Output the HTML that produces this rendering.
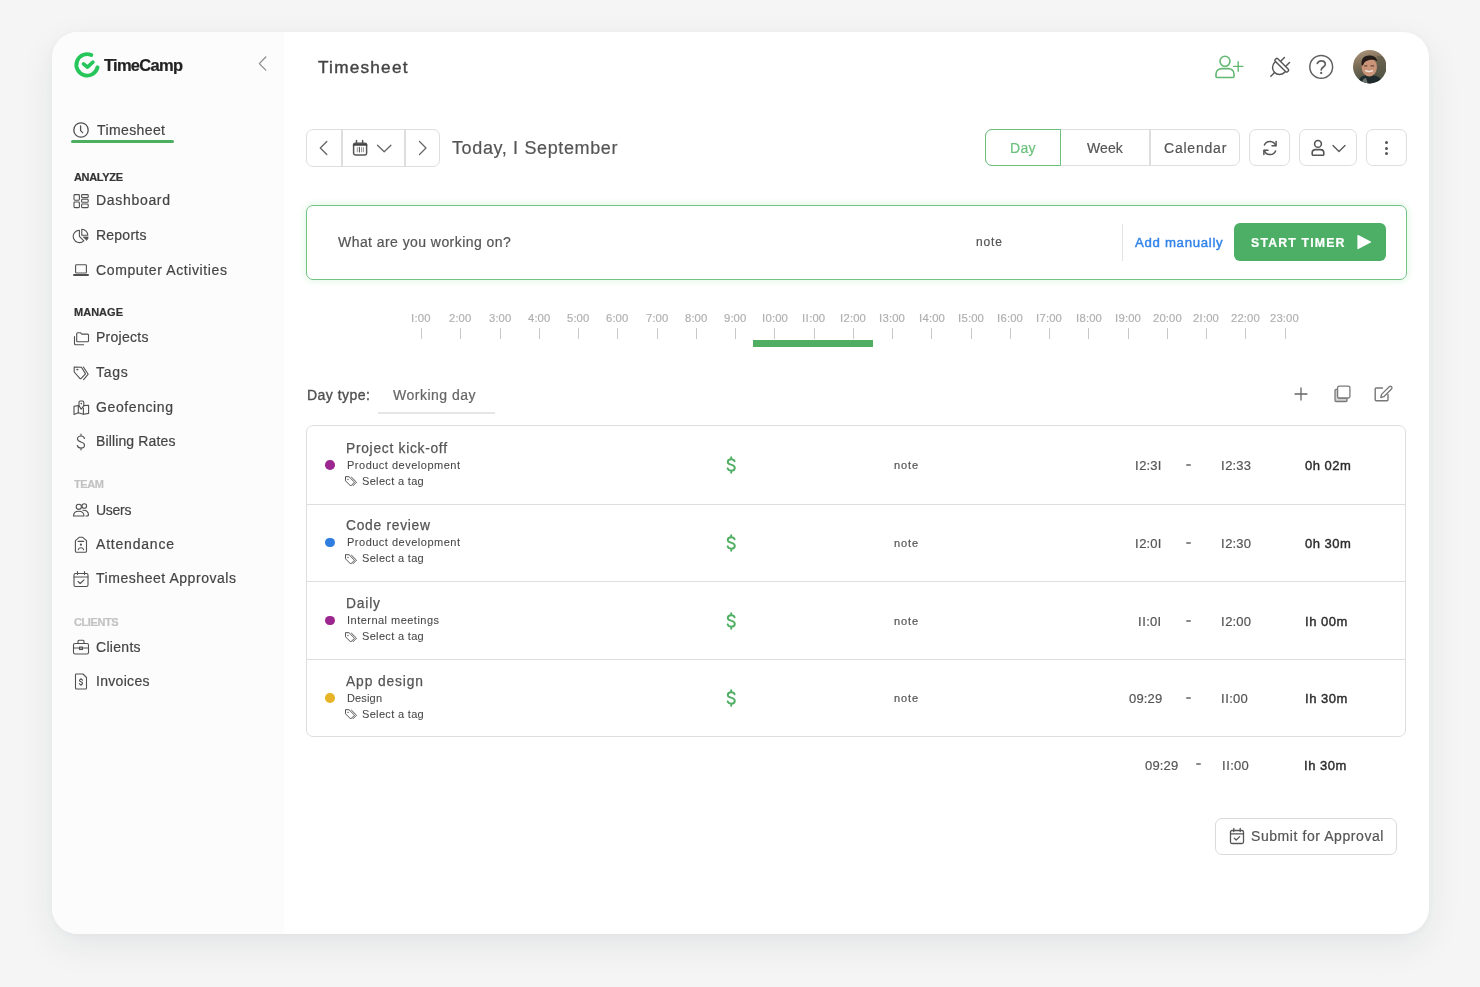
<!DOCTYPE html>
<html><head><meta charset="utf-8"><style>
html,body{margin:0;padding:0;}
body{width:1480px;height:987px;overflow:hidden;position:relative;background:#f5f5f5;font-family:"Liberation Sans",sans-serif;}
.a{position:absolute;box-sizing:border-box;}
.t{position:absolute;white-space:nowrap;line-height:1;will-change:transform;-webkit-text-stroke:0.2px currentColor;}
.o{display:inline-block;position:relative;-webkit-text-fill-color:transparent;-webkit-text-stroke-color:transparent;}
.o::after{content:'I';position:absolute;left:0;top:0;-webkit-text-fill-color:currentColor;-webkit-text-stroke-color:currentColor;letter-spacing:0;}
.card{background:#fff;border-radius:26px;box-shadow:0 12px 36px rgba(20,35,50,0.075),0 1px 8px rgba(20,35,50,0.03);}
</style></head><body>
<div class="a card" style="left:52px;top:32px;width:1376.5px;height:902px;"></div>
<div class="a" style="left:52px;top:32px;width:232px;height:902px;background:#fcfcfc;border-radius:26px 0 0 26px;"></div>
<svg class="a" style="left:0px;top:0px;" width="120" height="100" viewBox="0 0 120 100" fill="none" stroke-linecap="round" stroke-linejoin="round"><path d="M97.53 67.31 A10.7 10.7 0 1 1 91.33 55.07" stroke="#27c65a" stroke-width="3.9"/><path d="M83.5 63.8 L87.4 67.1 L92.9 62.1" stroke="#27c65a" stroke-width="3.6"/></svg>
<div class="t" style="left:104.00px;top:56.93px;font-size:16.5px;color:#222;letter-spacing:-0.722px;font-weight:700;">TimeCamp</div>
<svg class="a" style="left:255px;top:55px;" width="14" height="18" viewBox="0 0 14 18" fill="none" stroke-linecap="round" stroke-linejoin="round"><path d="M10.8 2 L4.3 8.6 L10.8 15.2" stroke="#8a8a8a" stroke-width="1.2"/></svg>
<svg class="a" style="left:72px;top:121px;" width="18" height="18" viewBox="0 0 18 18" fill="none" stroke-linecap="round" stroke-linejoin="round"><circle cx="9" cy="9" r="7.2" stroke="#505050" stroke-width="1.3"/><path d="M8.6 5 V9.6 L10.6 11.6" stroke="#505050" stroke-width="1.3"/></svg>
<div class="t" style="left:97.00px;top:123.15px;font-size:14px;color:#444;letter-spacing:0.396px;">Timesheet</div>
<div class="a" style="left:71px;top:140px;width:103px;height:2.6px;background:#4caf5f;border-radius:2px;"></div>
<div class="t" style="left:74.00px;top:171.89px;font-size:11px;color:#333;letter-spacing:-0.323px;font-weight:700;">ANALYZE</div>
<div class="t" style="left:74.00px;top:307.29px;font-size:11px;color:#333;letter-spacing:0.022px;font-weight:700;">MANAGE</div>
<div class="t" style="left:74.00px;top:479.29px;font-size:11px;color:#c2c2c2;letter-spacing:-0.388px;font-weight:700;">TEAM</div>
<div class="t" style="left:74.00px;top:616.59px;font-size:11px;color:#c2c2c2;letter-spacing:-0.409px;font-weight:700;">CLIENTS</div>
<div class="t" style="left:96.00px;top:193.45px;font-size:14px;color:#444;letter-spacing:0.689px;">Dashboard</div>
<svg class="a" style="left:72px;top:191.70000000000002px;" width="18" height="18" viewBox="0 0 18 18" fill="none" stroke-linecap="round" stroke-linejoin="round"><rect x="2" y="2.6" width="5.4" height="5.6" rx="0.9" stroke="#505050" stroke-width="1.1"/><rect x="2" y="10" width="5.4" height="5.6" rx="0.9" stroke="#505050" stroke-width="1.1"/><rect x="9.6" y="2.6" width="6.6" height="3" rx="0.9" stroke="#505050" stroke-width="1.1"/><rect x="9.6" y="7.3" width="6.6" height="3" rx="0.9" stroke="#505050" stroke-width="1.1"/><rect x="9.6" y="12" width="6.6" height="3.6" rx="0.9" stroke="#505050" stroke-width="1.1"/></svg>
<div class="t" style="left:96.00px;top:228.45px;font-size:14px;color:#444;letter-spacing:0.230px;">Reports</div>
<svg class="a" style="left:72px;top:226.70000000000002px;" width="18" height="18" viewBox="0 0 18 18" fill="none" stroke-linecap="round" stroke-linejoin="round"><path d="M7.4 9.4 V3.2 A6.2 6.2 0 1 0 11.8 13.8 Z" stroke="#505050" stroke-width="1.1"/><path d="M9.8 8.3 V2.3 A6 6 0 0 1 15.8 8.3 Z" stroke="#505050" stroke-width="1.1"/><path d="M11.4 9.9 H16.2 A4.8 4.8 0 0 1 14.8 13.3 Z" fill="#505050" stroke="#505050" stroke-width="0.6"/></svg>
<div class="t" style="left:96.00px;top:262.85px;font-size:14px;color:#444;letter-spacing:0.621px;">Computer Activities</div>
<svg class="a" style="left:72px;top:261.09999999999997px;" width="18" height="18" viewBox="0 0 18 18" fill="none" stroke-linecap="round" stroke-linejoin="round"><rect x="3.6" y="3.8" width="10.8" height="8.2" rx="0.8" stroke="#505050" stroke-width="1.1"/><path d="M2 14 H16" stroke="#505050" stroke-width="2"/></svg>
<div class="t" style="left:96.00px;top:330.45px;font-size:14px;color:#444;letter-spacing:0.261px;">Projects</div>
<svg class="a" style="left:72px;top:328.7px;" width="18" height="18" viewBox="0 0 18 18" fill="none" stroke-linecap="round" stroke-linejoin="round"><path d="M4.7 11.7 V4.8 A1 1 0 0 1 5.7 3.8 H8.6 L9.8 5.1 H15.5 A1 1 0 0 1 16.5 6.1 V11.7 A1 1 0 0 1 15.5 12.7 H5.7 A1 1 0 0 1 4.7 11.7 Z" stroke="#505050" stroke-width="1.1"/><path d="M2.5 7.5 V14.8 A1 1 0 0 0 3.5 15.8 H11.6" stroke="#505050" stroke-width="1.1"/></svg>
<div class="t" style="left:96.00px;top:365.45px;font-size:14px;color:#444;letter-spacing:0.743px;">Tags</div>
<svg class="a" style="left:72px;top:363.7px;" width="18" height="18" viewBox="0 0 18 18" fill="none" stroke-linecap="round" stroke-linejoin="round"><path d="M2.2 3 V8 L7.8 14.3 A1 1 0 0 0 9.2 14.3 L13.5 9.9 L9.5 3.2 Z" stroke="#505050" stroke-width="1.1"/><circle cx="5.2" cy="5.6" r="0.6" stroke="#505050" stroke-width="0.8"/><path d="M11.4 3 L16.2 10.2 L11.6 15.7" stroke="#505050" stroke-width="1.1"/></svg>
<div class="t" style="left:96.00px;top:399.75px;font-size:14px;color:#444;letter-spacing:0.600px;">Geofencing</div>
<svg class="a" style="left:72px;top:398.0px;" width="18" height="18" viewBox="0 0 18 18" fill="none" stroke-linecap="round" stroke-linejoin="round"><path d="M6.3 7.6 L2 8.2 V16.4 L6.3 14.8 L11.4 16.2 L16.6 15.4 V7.2 L11.8 7.6" stroke="#505050" stroke-width="1.1"/><path d="M6.3 7.6 V14.8 M11.4 10 V16.2" stroke="#505050" stroke-width="1.1"/><path d="M9.2 11.2 L7 7.6 V4.2 A1.2 1.2 0 0 1 8.2 3 H10.6 A1.2 1.2 0 0 1 11.8 4.2 V7.6 Z" stroke="#505050" stroke-width="1.1"/><circle cx="9.3" cy="5.6" r="0.8" fill="#505050"/></svg>
<div class="t" style="left:96.00px;top:434.25px;font-size:14px;color:#444;letter-spacing:0.132px;">Billing Rates</div>
<svg class="a" style="left:72px;top:432.5px;" width="18" height="18" viewBox="0 0 18 18" fill="none" stroke-linecap="round" stroke-linejoin="round"><path d="M12.5 5.5 C12 3.8 10.5 3 9 3 C7 3 5.5 4 5.5 6 C5.5 8 7.5 8.5 9 9 C10.8 9.5 12.5 10.2 12.5 12.2 C12.5 14.2 10.8 15 9 15 C7.2 15 5.8 14.2 5.3 12.5 M9 1 V3 M9 15 V17" stroke="#505050" stroke-width="1.1"/></svg>
<div class="t" style="left:96.00px;top:502.75px;font-size:14px;color:#444;letter-spacing:-0.264px;">Users</div>
<svg class="a" style="left:72px;top:501.0px;" width="18" height="18" viewBox="0 0 18 18" fill="none" stroke-linecap="round" stroke-linejoin="round"><circle cx="6.8" cy="5.8" r="2.6" stroke="#505050" stroke-width="1.1"/><circle cx="12.3" cy="5" r="2.3" stroke="#505050" stroke-width="1.1"/><path d="M1.5 15 C1.5 11.8 3.8 10.2 6.8 10.2 C9.8 10.2 12 11.8 12 15 Z" stroke="#505050" stroke-width="1.1"/><path d="M11 9.2 C14 9 16.5 10.5 16.5 14 C16.5 15 15.5 15 14 15" stroke="#505050" stroke-width="1.1"/></svg>
<div class="t" style="left:96.00px;top:536.75px;font-size:14px;color:#444;letter-spacing:0.797px;">Attendance</div>
<svg class="a" style="left:72px;top:535.0px;" width="18" height="18" viewBox="0 0 18 18" fill="none" stroke-linecap="round" stroke-linejoin="round"><path d="M3.4 5.6 V16 A1.2 1.2 0 0 0 4.6 17.2 H13.3 A1.2 1.2 0 0 0 14.5 16 V5.6 L10.7 2.3 H7.2 Z" stroke="#505050" stroke-width="1.1"/><path d="M6.2 6.4 H11.6" stroke="#505050" stroke-width="1.3"/><circle cx="8.95" cy="9.7" r="1.1" fill="#505050"/><path d="M6.3 14.6 A2.7 2.3 0 0 1 11.6 14.6" stroke="#505050" stroke-width="1.1"/></svg>
<div class="t" style="left:96.00px;top:571.35px;font-size:14px;color:#444;letter-spacing:0.544px;">Timesheet Approvals</div>
<svg class="a" style="left:72px;top:569.6px;" width="18" height="18" viewBox="0 0 18 18" fill="none" stroke-linecap="round" stroke-linejoin="round"><rect x="2" y="3.5" width="14" height="13" rx="1.5" stroke="#505050" stroke-width="1.1"/><path d="M2 7 H16 M5.5 1.5 V4.5 M12.5 1.5 V4.5 M6 11.5 L8.2 13.5 L12 9.8" stroke="#505050" stroke-width="1.1"/></svg>
<div class="t" style="left:96.00px;top:639.75px;font-size:14px;color:#444;letter-spacing:0.301px;">Clients</div>
<svg class="a" style="left:72px;top:638.0px;" width="18" height="18" viewBox="0 0 18 18" fill="none" stroke-linecap="round" stroke-linejoin="round"><rect x="1.5" y="5.5" width="15" height="10.5" rx="1.5" stroke="#505050" stroke-width="1.1"/><path d="M6 5.5 V3.2 A1 1 0 0 1 7 2.2 H11 A1 1 0 0 1 12 3.2 V5.5 M1.5 10 H16.5" stroke="#505050" stroke-width="1.1"/><rect x="7.5" y="9" width="3" height="2.5" stroke="#505050" stroke-width="1.1"/></svg>
<div class="t" style="left:96.00px;top:674.15px;font-size:14px;color:#444;letter-spacing:0.306px;">Invoices</div>
<svg class="a" style="left:72px;top:672.4px;" width="18" height="18" viewBox="0 0 18 18" fill="none" stroke-linecap="round" stroke-linejoin="round"><path d="M4 2 H11 L14.5 5.5 V16 A1 1 0 0 1 13.5 17 H4.5 A1 1 0 0 1 3.5 16 V3 A1 1 0 0 1 4 2 Z" stroke="#505050" stroke-width="1.1"/><path d="M10.5 8.3 C10.2 7.6 9.6 7.3 9 7.3 C8.1 7.3 7.5 7.8 7.5 8.5 C7.5 9.3 8.3 9.5 9 9.8 C9.8 10.1 10.5 10.4 10.5 11.3 C10.5 12.1 9.8 12.6 9 12.6 C8.2 12.6 7.6 12.2 7.4 11.6 M9 6.3 V7.3 M9 12.6 V13.6" stroke="#505050" stroke-width="1.1"/></svg>
<div class="t" style="left:318.40px;top:59.04px;font-size:17.2px;color:#444;letter-spacing:1.231px;-webkit-text-stroke:0.4px #444;">Timesheet</div>
<svg class="a" style="left:1213px;top:54px;" width="32" height="26" viewBox="0 0 32 26" fill="none" stroke-linecap="round" stroke-linejoin="round"><circle cx="12" cy="7.3" r="5" stroke="#62b873" stroke-width="1.6"/><path d="M3 22.5 V20 C3 16.5 6 14.6 9 14.6 H15 C18 14.6 21 16.5 21 20 V22.5 Q21 23.5 20 23.5 H4 Q3 23.5 3 22.5 Z" stroke="#62b873" stroke-width="1.6"/><path d="M20.6 12.4 H29.8 M25.2 7.6 V17.2" stroke="#62b873" stroke-width="1.4"/></svg>
<svg class="a" style="left:1265px;top:52px;" width="30" height="30" viewBox="0 0 30 30" fill="none" stroke-linecap="round" stroke-linejoin="round"><g transform="translate(15 15) scale(1.2) rotate(45)"><rect x="-7.2" y="-3.6" width="14.4" height="3" rx="1" stroke="#555" stroke-width="1.2"/><path d="M-5.8 -0.6 V0.6 A5.8 5.8 0 0 0 5.8 0.6 V-0.6" stroke="#555" stroke-width="1.2"/><path d="M-3 -3.8 V-8.2 M3 -3.8 V-8.2 M0 6.4 V10.8" stroke="#555" stroke-width="1.2"/></g></svg>
<svg class="a" style="left:1307px;top:53px;" width="28" height="28" viewBox="0 0 28 28" fill="none" stroke-linecap="round" stroke-linejoin="round"><circle cx="14.2" cy="13.9" r="11.4" stroke="#606060" stroke-width="1.5"/><path d="M10.3 10.4 C11.2 8.6 12.6 7.8 14.2 7.8 C16.6 7.8 18.3 9.3 18.3 11.2 C18.3 13.6 14.4 14.4 14.2 16.9" stroke="#606060" stroke-width="1.7"/><circle cx="14.2" cy="20" r="1.15" fill="#606060"/></svg>
<svg class="a" style="left:1353px;top:50.3px;" width="33.4" height="33.4" viewBox="0 0 33.4 33.4" fill="none" stroke-linecap="round" stroke-linejoin="round"><defs><clipPath id="avc"><circle cx="16.7" cy="16.7" r="16.7"/></clipPath><linearGradient id="avg" x1="0" y1="0" x2="0.3" y2="1"><stop offset="0" stop-color="#b39a80"/><stop offset="0.45" stop-color="#7d6e58"/><stop offset="1" stop-color="#3f4a40"/></linearGradient></defs><g clip-path="url(#avc)"><rect width="34" height="34" fill="url(#avg)"/><rect x="24" y="6" width="10" height="22" fill="#5e5a4a" opacity="0.6"/><path d="M4 34 C6 27 10 25 16 25 C23 25 28 27 31 34 Z" fill="#1f2a2c"/><path d="M9 34 C9 30 11 28 13 28 L15 34 Z" fill="#6b7470"/><ellipse cx="16.3" cy="17.2" rx="7.6" ry="9.4" fill="#c99477"/><path d="M8.6 15 C8 9 10.5 5.6 16 5.4 C21 5.2 24 7.5 24.3 11.5 C22 9.8 19 9.4 15.5 10.2 C12.5 10.9 10.8 12.5 9.8 15.8 Z" fill="#231b17"/><path d="M12.5 20.8 Q16.3 23.2 20 20.6 Q16.3 22 12.5 20.8 Z" fill="#f1e6df" stroke="#f1e6df" stroke-width="1"/><path d="M11.5 15.8 H14 M18 15.8 H20.8" stroke="#6a4a3a" stroke-width="1.2"/></g></svg>
<div class="a" style="left:306px;top:129px;width:134.4px;height:37.6px;border:1.5px solid #dedede;border-radius:7px;"></div>
<div class="a" style="left:341px;top:129.5px;width:1.5px;height:36.5px;background:#dedede;"></div>
<div class="a" style="left:404px;top:129.5px;width:1.5px;height:36.5px;background:#dedede;"></div>
<svg class="a" style="left:316px;top:139px;" width="14" height="18" viewBox="0 0 14 18" fill="none" stroke-linecap="round" stroke-linejoin="round"><path d="M10.8 2.5 L4.3 9 L10.8 15.5" stroke="#666" stroke-width="1.3"/></svg>
<svg class="a" style="left:416px;top:139px;" width="14" height="18" viewBox="0 0 14 18" fill="none" stroke-linecap="round" stroke-linejoin="round"><path d="M3.5 2.5 L10 9 L3.5 15.5" stroke="#666" stroke-width="1.3"/></svg>
<svg class="a" style="left:351px;top:139px;" width="18" height="18" viewBox="0 0 18 18" fill="none" stroke-linecap="round" stroke-linejoin="round"><rect x="2.6" y="4.3" width="13" height="11.6" rx="1.6" stroke="#555" stroke-width="1.5"/><path d="M2.6 5.9 H15.6" stroke="#444" stroke-width="1.6"/><path d="M5.5 1.4 V4.2 M11.6 1.4 V4.2" stroke="#555" stroke-width="1.5"/><path d="M6.3 8.6 V12.8 M10.6 8.6 V12.8 M12.4 8.6 V12.8" stroke="#888" stroke-width="0.9"/><path d="M8.4 8.4 V13" stroke="#555" stroke-width="1.1"/></svg>
<svg class="a" style="left:375px;top:143px;" width="18" height="11" viewBox="0 0 18 11" fill="none" stroke-linecap="round" stroke-linejoin="round"><path d="M2.5 2.3 L9.2 8.8 L15.9 2.3" stroke="#666" stroke-width="1.3"/></svg>
<div class="t" style="left:452.40px;top:138.76px;font-size:18px;color:#555;letter-spacing:0.618px;">Today, <span class="o" style="width:5.76px">1</span> September</div>
<div class="a" style="left:985px;top:129px;width:255px;height:37px;border:1.5px solid #dedede;border-radius:7px;"></div>
<div class="a" style="left:985px;top:129px;width:76px;height:37px;border:1.5px solid #6cc07c;border-radius:7px 0 0 7px;"></div>
<div class="a" style="left:1149px;top:129.5px;width:1.5px;height:36px;background:#dedede;"></div>
<div class="t" style="left:1010.30px;top:140.65px;font-size:14px;color:#6cc07c;letter-spacing:0.302px;">Day</div>
<div class="t" style="left:1087.00px;top:140.65px;font-size:14px;color:#555;letter-spacing:0.089px;">Week</div>
<div class="t" style="left:1163.70px;top:140.65px;font-size:14px;color:#555;letter-spacing:0.784px;">Calendar</div>
<div class="a" style="left:1248.5px;top:129px;width:41.5px;height:37px;border:1.5px solid #dedede;border-radius:7px;"></div>
<svg class="a" style="left:1260px;top:138px;" width="20" height="20" viewBox="0 0 20 20" fill="none" stroke-linecap="round" stroke-linejoin="round"><path d="M15.6 7.6 A6 6 0 0 0 4.4 7 M4.4 12.4 A6 6 0 0 0 15.6 13" stroke="#555" stroke-width="1.5"/><path d="M16.1 3.4 V7.8 H12 M3.9 16.6 V12.2 H8" stroke="#555" stroke-width="1.5"/></svg>
<div class="a" style="left:1299px;top:129px;width:58.4px;height:37px;border:1.5px solid #dedede;border-radius:7px;"></div>
<svg class="a" style="left:1309px;top:139px;" width="18" height="18" viewBox="0 0 18 18" fill="none" stroke-linecap="round" stroke-linejoin="round"><circle cx="9" cy="4.9" r="3.4" stroke="#555" stroke-width="1.6"/><path d="M3.2 15.2 V13.6 C3.2 11.6 4.8 10.6 6.6 10.6 H11.4 C13.2 10.6 14.8 11.6 14.8 13.6 V15.2 A1 1 0 0 1 13.8 16.2 H4.2 A1 1 0 0 1 3.2 15.2 Z" stroke="#555" stroke-width="1.6"/></svg>
<svg class="a" style="left:1331px;top:143px;" width="16" height="11" viewBox="0 0 16 11" fill="none" stroke-linecap="round" stroke-linejoin="round"><path d="M2 2.5 L8 8.5 L14 2.5" stroke="#555" stroke-width="1.3"/></svg>
<div class="a" style="left:1365.5px;top:129px;width:41.2px;height:37px;border:1.5px solid #dedede;border-radius:7px;"></div>
<div class="a" style="left:1385px;top:141.0px;width:3.1px;height:3.1px;background:#555;border-radius:50%;"></div>
<div class="a" style="left:1385px;top:146.5px;width:3.1px;height:3.1px;background:#555;border-radius:50%;"></div>
<div class="a" style="left:1385px;top:152.0px;width:3.1px;height:3.1px;background:#555;border-radius:50%;"></div>
<div class="a" style="left:306px;top:205px;width:1101px;height:74.6px;border:1.8px solid #72c383;border-radius:7px;box-shadow:0 0 7px 1px rgba(70,200,100,0.16);"></div>
<div class="t" style="left:338.20px;top:235.05px;font-size:14px;color:#555;letter-spacing:0.438px;">What are you working on?</div>
<div class="t" style="left:976.20px;top:235.84px;font-size:12px;color:#555;letter-spacing:0.816px;">note</div>
<div class="a" style="left:1122px;top:223.6px;width:1.3px;height:37.3px;background:#e3e3e3;"></div>
<div class="t" style="left:1135.00px;top:236.03px;font-size:13.2px;color:#3384ea;letter-spacing:0.702px;-webkit-text-stroke:0.45px #3384ea;">Add manually</div>
<div class="a" style="left:1234.2px;top:223.4px;width:151.7px;height:37.6px;background:#4daf65;border-radius:6px;"></div>
<div class="t" style="left:1251.30px;top:236.59px;font-size:12.3px;color:#fff;letter-spacing:1.174px;font-weight:700;">START TIMER</div>
<svg class="a" style="left:1355px;top:233px;" width="18" height="18" viewBox="0 0 18 18" fill="none" stroke-linecap="round" stroke-linejoin="round"><path d="M3 2.5 L15.5 9 L3 15.5 Z" fill="#fff" stroke="#fff" stroke-width="1.2"/></svg>
<div class="t" style="left:411.44px;top:313.23px;font-size:11.3px;color:#b0b0b0;letter-spacing:0.100px;"><span class="o" style="width:3.62px">1</span>:00</div>
<div class="a" style="left:421.1px;top:328px;width:1.1px;height:10.5px;background:#c9c9c9;"></div>
<div class="t" style="left:449.35px;top:313.23px;font-size:11.3px;color:#b0b0b0;letter-spacing:0.100px;">2:00</div>
<div class="a" style="left:460.35px;top:328px;width:1.1px;height:10.5px;background:#c9c9c9;"></div>
<div class="t" style="left:488.60px;top:313.23px;font-size:11.3px;color:#b0b0b0;letter-spacing:0.100px;">3:00</div>
<div class="a" style="left:499.6px;top:328px;width:1.1px;height:10.5px;background:#c9c9c9;"></div>
<div class="t" style="left:527.85px;top:313.23px;font-size:11.3px;color:#b0b0b0;letter-spacing:0.100px;">4:00</div>
<div class="a" style="left:538.85px;top:328px;width:1.1px;height:10.5px;background:#c9c9c9;"></div>
<div class="t" style="left:567.10px;top:313.23px;font-size:11.3px;color:#b0b0b0;letter-spacing:0.100px;">5:00</div>
<div class="a" style="left:578.1px;top:328px;width:1.1px;height:10.5px;background:#c9c9c9;"></div>
<div class="t" style="left:606.35px;top:313.23px;font-size:11.3px;color:#b0b0b0;letter-spacing:0.100px;">6:00</div>
<div class="a" style="left:617.35px;top:328px;width:1.1px;height:10.5px;background:#c9c9c9;"></div>
<div class="t" style="left:645.60px;top:313.23px;font-size:11.3px;color:#b0b0b0;letter-spacing:0.100px;">7:00</div>
<div class="a" style="left:656.6px;top:328px;width:1.1px;height:10.5px;background:#c9c9c9;"></div>
<div class="t" style="left:684.85px;top:313.23px;font-size:11.3px;color:#b0b0b0;letter-spacing:0.100px;">8:00</div>
<div class="a" style="left:695.85px;top:328px;width:1.1px;height:10.5px;background:#c9c9c9;"></div>
<div class="t" style="left:724.10px;top:313.23px;font-size:11.3px;color:#b0b0b0;letter-spacing:0.100px;">9:00</div>
<div class="a" style="left:735.1px;top:328px;width:1.1px;height:10.5px;background:#c9c9c9;"></div>
<div class="t" style="left:761.50px;top:313.23px;font-size:11.3px;color:#b0b0b0;letter-spacing:0.100px;"><span class="o" style="width:3.62px">1</span>0:00</div>
<div class="a" style="left:774.35px;top:328px;width:1.1px;height:10.5px;background:#c9c9c9;"></div>
<div class="t" style="left:802.08px;top:313.23px;font-size:11.3px;color:#b0b0b0;letter-spacing:0.100px;"><span class="o" style="width:3.62px">1</span><span class="o" style="width:3.62px">1</span>:00</div>
<div class="a" style="left:813.6px;top:328px;width:1.1px;height:10.5px;background:#c9c9c9;"></div>
<div class="t" style="left:840.00px;top:313.23px;font-size:11.3px;color:#b0b0b0;letter-spacing:0.100px;"><span class="o" style="width:3.62px">1</span>2:00</div>
<div class="a" style="left:852.85px;top:328px;width:1.1px;height:10.5px;background:#c9c9c9;"></div>
<div class="t" style="left:879.25px;top:313.23px;font-size:11.3px;color:#b0b0b0;letter-spacing:0.100px;"><span class="o" style="width:3.62px">1</span>3:00</div>
<div class="a" style="left:892.1px;top:328px;width:1.1px;height:10.5px;background:#c9c9c9;"></div>
<div class="t" style="left:918.50px;top:313.23px;font-size:11.3px;color:#b0b0b0;letter-spacing:0.100px;"><span class="o" style="width:3.62px">1</span>4:00</div>
<div class="a" style="left:931.35px;top:328px;width:1.1px;height:10.5px;background:#c9c9c9;"></div>
<div class="t" style="left:957.75px;top:313.23px;font-size:11.3px;color:#b0b0b0;letter-spacing:0.100px;"><span class="o" style="width:3.62px">1</span>5:00</div>
<div class="a" style="left:970.6px;top:328px;width:1.1px;height:10.5px;background:#c9c9c9;"></div>
<div class="t" style="left:997.00px;top:313.23px;font-size:11.3px;color:#b0b0b0;letter-spacing:0.100px;"><span class="o" style="width:3.62px">1</span>6:00</div>
<div class="a" style="left:1009.85px;top:328px;width:1.1px;height:10.5px;background:#c9c9c9;"></div>
<div class="t" style="left:1036.25px;top:313.23px;font-size:11.3px;color:#b0b0b0;letter-spacing:0.100px;"><span class="o" style="width:3.62px">1</span>7:00</div>
<div class="a" style="left:1049.1px;top:328px;width:1.1px;height:10.5px;background:#c9c9c9;"></div>
<div class="t" style="left:1075.50px;top:313.23px;font-size:11.3px;color:#b0b0b0;letter-spacing:0.100px;"><span class="o" style="width:3.62px">1</span>8:00</div>
<div class="a" style="left:1088.35px;top:328px;width:1.1px;height:10.5px;background:#c9c9c9;"></div>
<div class="t" style="left:1114.75px;top:313.23px;font-size:11.3px;color:#b0b0b0;letter-spacing:0.100px;"><span class="o" style="width:3.62px">1</span>9:00</div>
<div class="a" style="left:1127.6px;top:328px;width:1.1px;height:10.5px;background:#c9c9c9;"></div>
<div class="t" style="left:1152.66px;top:313.23px;font-size:11.3px;color:#b0b0b0;letter-spacing:0.100px;">20:00</div>
<div class="a" style="left:1166.85px;top:328px;width:1.1px;height:10.5px;background:#c9c9c9;"></div>
<div class="t" style="left:1193.25px;top:313.23px;font-size:11.3px;color:#b0b0b0;letter-spacing:0.100px;">2<span class="o" style="width:3.62px">1</span>:00</div>
<div class="a" style="left:1206.1px;top:328px;width:1.1px;height:10.5px;background:#c9c9c9;"></div>
<div class="t" style="left:1231.16px;top:313.23px;font-size:11.3px;color:#b0b0b0;letter-spacing:0.100px;">22:00</div>
<div class="a" style="left:1245.35px;top:328px;width:1.1px;height:10.5px;background:#c9c9c9;"></div>
<div class="t" style="left:1270.41px;top:313.23px;font-size:11.3px;color:#b0b0b0;letter-spacing:0.100px;">23:00</div>
<div class="a" style="left:1284.6px;top:328px;width:1.1px;height:10.5px;background:#c9c9c9;"></div>
<div class="a" style="left:752.6px;top:340.3px;width:120.4px;height:6.4px;background:#4fae62;"></div>
<div class="t" style="left:306.70px;top:387.65px;font-size:14px;color:#505050;letter-spacing:0.483px;-webkit-text-stroke:0.35px #505050;">Day type:</div>
<div class="t" style="left:393.40px;top:387.65px;font-size:14px;color:#666;letter-spacing:0.495px;">Working day</div>
<div class="a" style="left:378px;top:412.3px;width:117px;height:2px;background:#e6e6e6;"></div>
<svg class="a" style="left:1292px;top:385px;" width="18" height="18" viewBox="0 0 18 18" fill="none" stroke-linecap="round" stroke-linejoin="round"><path d="M9 3 V15 M3 9 H15" stroke="#666" stroke-width="1.3"/></svg>
<svg class="a" style="left:1333px;top:384px;" width="20" height="20" viewBox="0 0 20 20" fill="none" stroke-linecap="round" stroke-linejoin="round"><path d="M4.6 5.4 H3 A1 1 0 0 0 2 6.4 V16.5 A1 1 0 0 0 3 17.5 H13 A1 1 0 0 0 14 16.5 V14 H6 A1.4 1.4 0 0 1 4.6 12.6 Z" fill="#d4d4d4" stroke="#7a7a7a" stroke-width="1.3"/><rect x="4.6" y="2.1" width="12.3" height="11.9" rx="1.5" fill="#fff" stroke="#7a7a7a" stroke-width="1.3"/></svg>
<svg class="a" style="left:1374px;top:384px;" width="20" height="20" viewBox="0 0 20 20" fill="none" stroke-linecap="round" stroke-linejoin="round"><path d="M8.5 4 H2.2 A1 1 0 0 0 1.2 5 V15.8 A1 1 0 0 0 2.2 16.8 H13 A1 1 0 0 0 14 15.8 V10.5" stroke="#777" stroke-width="1.4"/><path d="M15.2 2.7 A1.6 1.6 0 0 1 17.5 5 L9.8 12.7 L6.8 13.5 L7.5 10.4 Z" stroke="#777" stroke-width="1.3"/></svg>
<div class="a" style="left:306px;top:425.3px;width:1099.7px;height:312px;border:1.5px solid #dedede;border-radius:7px;"></div>
<div class="a" style="left:307px;top:504px;width:1098px;height:1px;background:#dedede;"></div>
<div class="a" style="left:307px;top:581px;width:1098px;height:1px;background:#dedede;"></div>
<div class="a" style="left:307px;top:659px;width:1098px;height:1px;background:#dedede;"></div>
<div class="t" style="left:345.60px;top:441.62px;font-size:13.8px;color:#555;letter-spacing:0.718px;-webkit-text-stroke:0.25px #555;">Project kick-off</div>
<div class="t" style="left:346.80px;top:459.69px;font-size:11px;color:#444;letter-spacing:0.503px;-webkit-text-stroke:0.05px #444;">Product development</div>
<svg class="a" style="left:344px;top:475.0px;" width="14" height="13" viewBox="0 0 14 13" fill="none" stroke-linecap="round" stroke-linejoin="round"><path d="M1.5 2 V5.8 L6.7 11 L10.5 7.2 L5.3 2 Z" stroke="#555" stroke-width="1"/><circle cx="4" cy="4.5" r="0.7" fill="#555"/><path d="M7.5 2.2 L12.5 7.2 L9 10.7" stroke="#555" stroke-width="1"/></svg>
<div class="t" style="left:362.30px;top:475.69px;font-size:11px;color:#444;letter-spacing:0.328px;-webkit-text-stroke:0.05px #444;">Select a tag</div>
<div class="a" style="left:325.2px;top:460.0px;width:9.6px;height:9.6px;background:#9c2790;border-radius:50%;"></div>
<svg class="a" style="left:722px;top:455.0px;" width="18" height="20" viewBox="0 0 18 20" fill="none" stroke-linecap="round" stroke-linejoin="round"><path d="M12.6 6.3 C12.2 4.9 11 4.2 9.2 4.2 C7.2 4.2 5.8 5.2 5.8 6.9 C5.8 8.7 7.6 9.2 9.2 9.7 C11 10.2 12.8 10.9 12.8 12.9 C12.8 14.7 11.2 15.6 9.2 15.6 C7.4 15.6 6 14.8 5.6 13.3 M9.2 2.2 V4.2 M9.2 15.6 V17.8" stroke="#4fae62" stroke-width="1.9"/></svg>
<div class="t" style="left:894.20px;top:460.19px;font-size:11px;color:#555;letter-spacing:0.864px;">note</div>
<div class="t" style="left:1135.11px;top:459.10px;font-size:13px;color:#555;letter-spacing:0.150px;"><span class="o" style="width:4.16px">1</span>2:3<span class="o" style="width:4.16px">1</span></div>
<div class="a" style="left:1186px;top:464px;width:5px;height:2px;background:#8a8a8a;border-radius:1px;"></div>
<div class="t" style="left:1221.00px;top:459.10px;font-size:13px;color:#555;letter-spacing:0.150px;"><span class="o" style="width:4.16px">1</span>2:33</div>
<div class="t" style="left:1304.80px;top:459.10px;font-size:13px;color:#2b2b2b;letter-spacing:0.500px;-webkit-text-stroke:0.4px #2b2b2b;">0h 02m</div>
<div class="t" style="left:345.60px;top:519.37px;font-size:13.8px;color:#555;letter-spacing:0.730px;-webkit-text-stroke:0.25px #555;">Code review</div>
<div class="t" style="left:346.80px;top:537.44px;font-size:11px;color:#444;letter-spacing:0.503px;-webkit-text-stroke:0.05px #444;">Product development</div>
<svg class="a" style="left:344px;top:552.75px;" width="14" height="13" viewBox="0 0 14 13" fill="none" stroke-linecap="round" stroke-linejoin="round"><path d="M1.5 2 V5.8 L6.7 11 L10.5 7.2 L5.3 2 Z" stroke="#555" stroke-width="1"/><circle cx="4" cy="4.5" r="0.7" fill="#555"/><path d="M7.5 2.2 L12.5 7.2 L9 10.7" stroke="#555" stroke-width="1"/></svg>
<div class="t" style="left:362.30px;top:553.44px;font-size:11px;color:#444;letter-spacing:0.328px;-webkit-text-stroke:0.05px #444;">Select a tag</div>
<div class="a" style="left:325.2px;top:537.75px;width:9.6px;height:9.6px;background:#2f7de1;border-radius:50%;"></div>
<svg class="a" style="left:722px;top:532.75px;" width="18" height="20" viewBox="0 0 18 20" fill="none" stroke-linecap="round" stroke-linejoin="round"><path d="M12.6 6.3 C12.2 4.9 11 4.2 9.2 4.2 C7.2 4.2 5.8 5.2 5.8 6.9 C5.8 8.7 7.6 9.2 9.2 9.7 C11 10.2 12.8 10.9 12.8 12.9 C12.8 14.7 11.2 15.6 9.2 15.6 C7.4 15.6 6 14.8 5.6 13.3 M9.2 2.2 V4.2 M9.2 15.6 V17.8" stroke="#4fae62" stroke-width="1.9"/></svg>
<div class="t" style="left:894.20px;top:537.94px;font-size:11px;color:#555;letter-spacing:0.864px;">note</div>
<div class="t" style="left:1135.11px;top:536.85px;font-size:13px;color:#555;letter-spacing:0.150px;"><span class="o" style="width:4.16px">1</span>2:0<span class="o" style="width:4.16px">1</span></div>
<div class="a" style="left:1186px;top:542px;width:5px;height:2px;background:#8a8a8a;border-radius:1px;"></div>
<div class="t" style="left:1221.00px;top:536.85px;font-size:13px;color:#555;letter-spacing:0.150px;"><span class="o" style="width:4.16px">1</span>2:30</div>
<div class="t" style="left:1304.80px;top:536.85px;font-size:13px;color:#2b2b2b;letter-spacing:0.500px;-webkit-text-stroke:0.4px #2b2b2b;">0h 30m</div>
<div class="t" style="left:345.60px;top:597.12px;font-size:13.8px;color:#555;letter-spacing:0.832px;-webkit-text-stroke:0.25px #555;">Daily</div>
<div class="t" style="left:346.80px;top:615.19px;font-size:11px;color:#444;letter-spacing:0.477px;-webkit-text-stroke:0.05px #444;">Internal meetings</div>
<svg class="a" style="left:344px;top:630.5px;" width="14" height="13" viewBox="0 0 14 13" fill="none" stroke-linecap="round" stroke-linejoin="round"><path d="M1.5 2 V5.8 L6.7 11 L10.5 7.2 L5.3 2 Z" stroke="#555" stroke-width="1"/><circle cx="4" cy="4.5" r="0.7" fill="#555"/><path d="M7.5 2.2 L12.5 7.2 L9 10.7" stroke="#555" stroke-width="1"/></svg>
<div class="t" style="left:362.30px;top:631.19px;font-size:11px;color:#444;letter-spacing:0.328px;-webkit-text-stroke:0.05px #444;">Select a tag</div>
<div class="a" style="left:325.2px;top:615.5px;width:9.6px;height:9.6px;background:#9c2790;border-radius:50%;"></div>
<svg class="a" style="left:722px;top:610.5px;" width="18" height="20" viewBox="0 0 18 20" fill="none" stroke-linecap="round" stroke-linejoin="round"><path d="M12.6 6.3 C12.2 4.9 11 4.2 9.2 4.2 C7.2 4.2 5.8 5.2 5.8 6.9 C5.8 8.7 7.6 9.2 9.2 9.7 C11 10.2 12.8 10.9 12.8 12.9 C12.8 14.7 11.2 15.6 9.2 15.6 C7.4 15.6 6 14.8 5.6 13.3 M9.2 2.2 V4.2 M9.2 15.6 V17.8" stroke="#4fae62" stroke-width="1.9"/></svg>
<div class="t" style="left:894.20px;top:615.69px;font-size:11px;color:#555;letter-spacing:0.864px;">note</div>
<div class="t" style="left:1138.18px;top:614.60px;font-size:13px;color:#555;letter-spacing:0.150px;"><span class="o" style="width:4.16px">1</span><span class="o" style="width:4.16px">1</span>:0<span class="o" style="width:4.16px">1</span></div>
<div class="a" style="left:1186px;top:620px;width:5px;height:2px;background:#8a8a8a;border-radius:1px;"></div>
<div class="t" style="left:1221.00px;top:614.60px;font-size:13px;color:#555;letter-spacing:0.150px;"><span class="o" style="width:4.16px">1</span>2:00</div>
<div class="t" style="left:1304.80px;top:614.60px;font-size:13px;color:#2b2b2b;letter-spacing:0.500px;-webkit-text-stroke:0.4px #2b2b2b;"><span class="o" style="width:4.16px">1</span>h 00m</div>
<div class="t" style="left:345.60px;top:674.87px;font-size:13.8px;color:#555;letter-spacing:0.883px;-webkit-text-stroke:0.25px #555;">App design</div>
<div class="t" style="left:346.80px;top:692.94px;font-size:11px;color:#444;letter-spacing:0.152px;-webkit-text-stroke:0.05px #444;">Design</div>
<svg class="a" style="left:344px;top:708.25px;" width="14" height="13" viewBox="0 0 14 13" fill="none" stroke-linecap="round" stroke-linejoin="round"><path d="M1.5 2 V5.8 L6.7 11 L10.5 7.2 L5.3 2 Z" stroke="#555" stroke-width="1"/><circle cx="4" cy="4.5" r="0.7" fill="#555"/><path d="M7.5 2.2 L12.5 7.2 L9 10.7" stroke="#555" stroke-width="1"/></svg>
<div class="t" style="left:362.30px;top:708.94px;font-size:11px;color:#444;letter-spacing:0.328px;-webkit-text-stroke:0.05px #444;">Select a tag</div>
<div class="a" style="left:325.2px;top:693.25px;width:9.6px;height:9.6px;background:#e8b427;border-radius:50%;"></div>
<svg class="a" style="left:722px;top:688.25px;" width="18" height="20" viewBox="0 0 18 20" fill="none" stroke-linecap="round" stroke-linejoin="round"><path d="M12.6 6.3 C12.2 4.9 11 4.2 9.2 4.2 C7.2 4.2 5.8 5.2 5.8 6.9 C5.8 8.7 7.6 9.2 9.2 9.7 C11 10.2 12.8 10.9 12.8 12.9 C12.8 14.7 11.2 15.6 9.2 15.6 C7.4 15.6 6 14.8 5.6 13.3 M9.2 2.2 V4.2 M9.2 15.6 V17.8" stroke="#4fae62" stroke-width="1.9"/></svg>
<div class="t" style="left:894.20px;top:693.44px;font-size:11px;color:#555;letter-spacing:0.864px;">note</div>
<div class="t" style="left:1128.97px;top:692.35px;font-size:13px;color:#555;letter-spacing:0.150px;">09:29</div>
<div class="a" style="left:1186px;top:697px;width:5px;height:2px;background:#8a8a8a;border-radius:1px;"></div>
<div class="t" style="left:1221.00px;top:692.35px;font-size:13px;color:#555;letter-spacing:0.150px;"><span class="o" style="width:4.16px">1</span><span class="o" style="width:4.16px">1</span>:00</div>
<div class="t" style="left:1304.80px;top:692.35px;font-size:13px;color:#2b2b2b;letter-spacing:0.500px;-webkit-text-stroke:0.4px #2b2b2b;"><span class="o" style="width:4.16px">1</span>h 30m</div>
<div class="t" style="left:1145.07px;top:758.60px;font-size:13px;color:#555;letter-spacing:0.150px;">09:29</div>
<div class="a" style="left:1195.6px;top:763px;width:5.5px;height:2px;background:#8a8a8a;border-radius:1px;"></div>
<div class="t" style="left:1222.10px;top:758.60px;font-size:13px;color:#555;letter-spacing:0.150px;"><span class="o" style="width:4.16px">1</span><span class="o" style="width:4.16px">1</span>:00</div>
<div class="t" style="left:1304.00px;top:758.60px;font-size:13px;color:#2b2b2b;letter-spacing:0.500px;-webkit-text-stroke:0.4px #2b2b2b;"><span class="o" style="width:4.16px">1</span>h 30m</div>
<div class="a" style="left:1215px;top:817.5px;width:182.3px;height:37px;border:1.5px solid #dadada;border-radius:7px;"></div>
<svg class="a" style="left:1228px;top:827px;" width="18" height="18" viewBox="0 0 18 18" fill="none" stroke-linecap="round" stroke-linejoin="round"><rect x="2.5" y="3.5" width="13" height="13" rx="1.5" stroke="#555" stroke-width="1.3"/><path d="M2.5 6.8 H15.5 M5.8 1.5 V4.5 M12.2 1.5 V4.5 M6.3 11.3 L8.2 13 L11.7 9.6" stroke="#555" stroke-width="1.3"/></svg>
<div class="t" style="left:1250.70px;top:828.65px;font-size:14px;color:#555;letter-spacing:0.569px;">Submit for Approval</div>
</body></html>
